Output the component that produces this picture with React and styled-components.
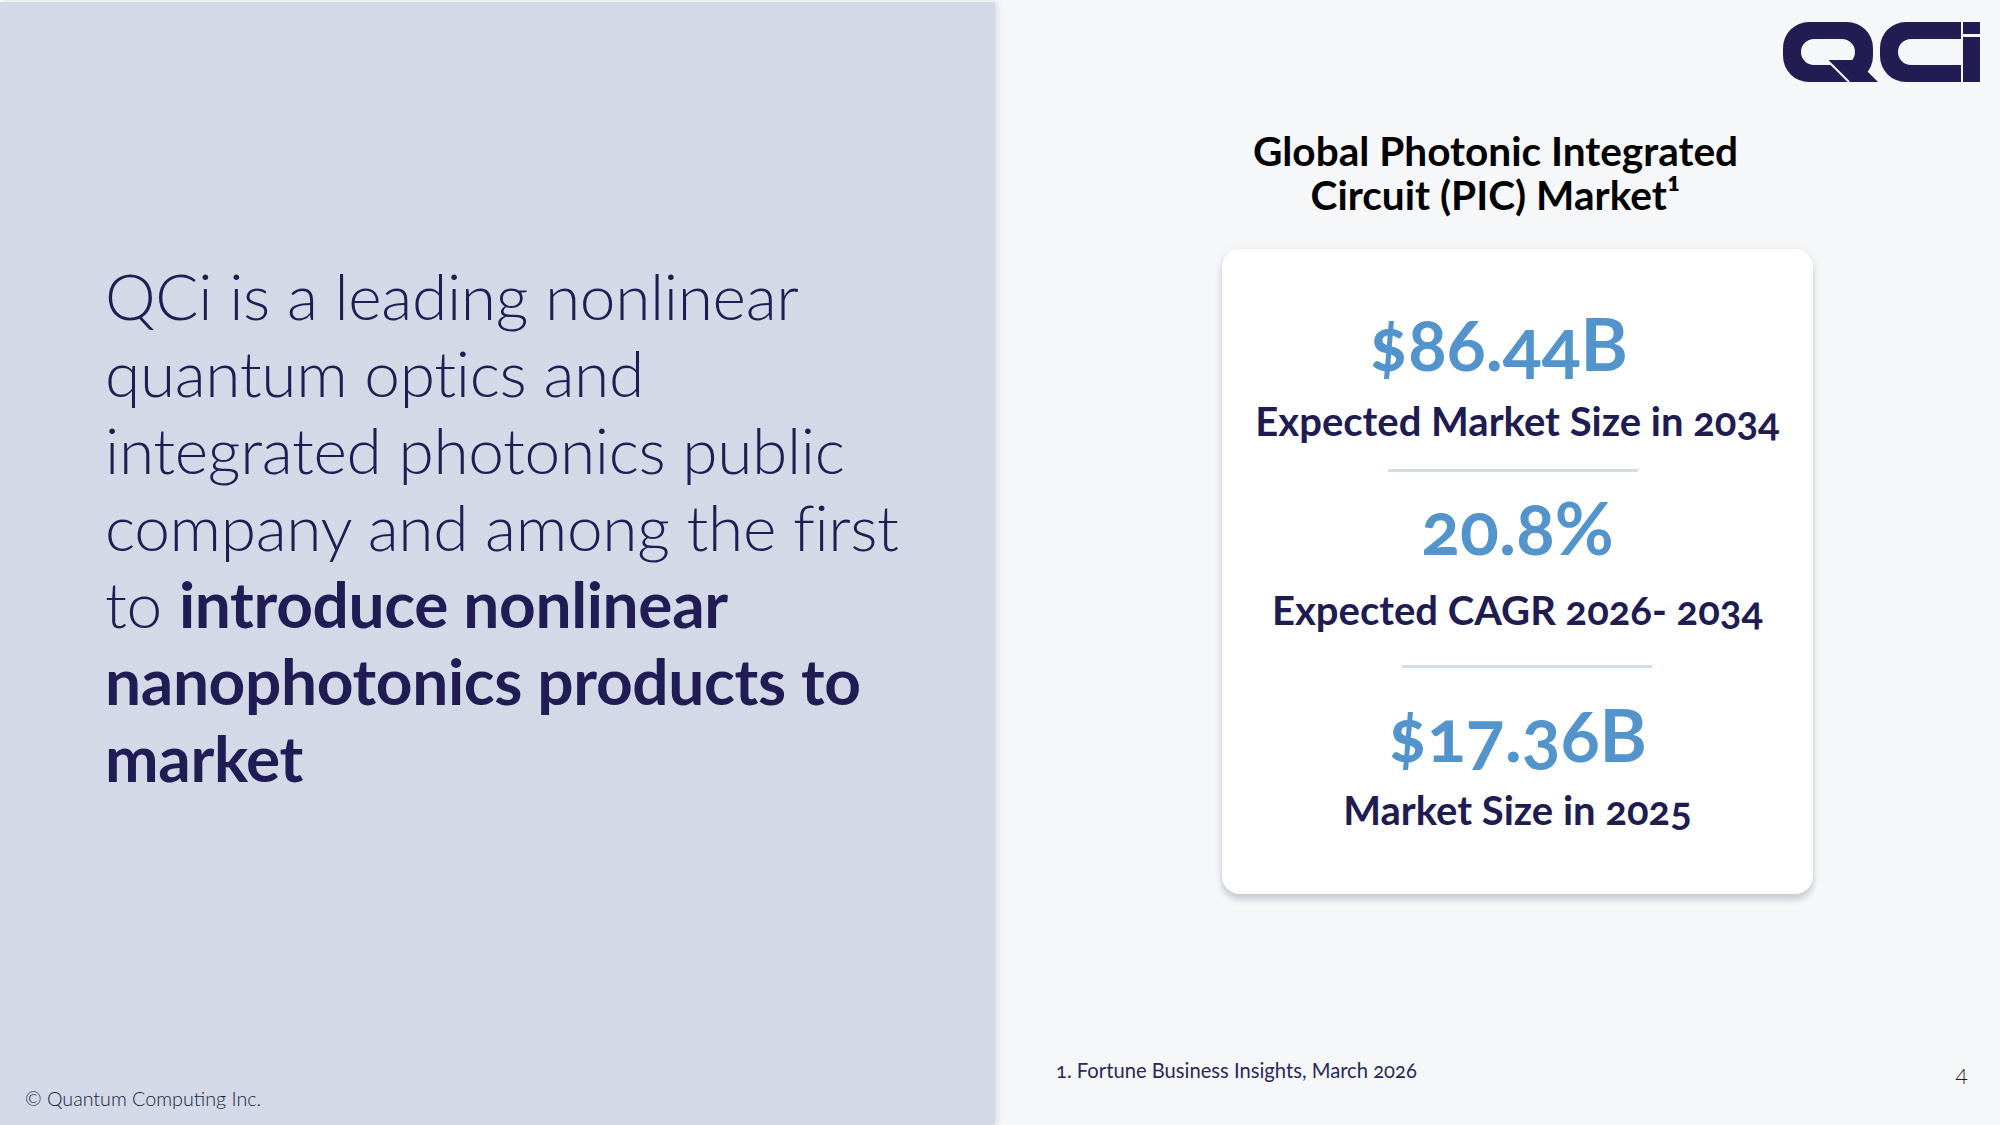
import React from "react";
import styled, { createGlobalStyle } from "styled-components";

const GlobalStyle = createGlobalStyle`
    html, body {
        margin: 0;
        padding: 0;
        background-color: #F6F7F9;
    }
    body {
        font-family: "Lato", "Noto Sans", sans-serif;
        color: #211D54;
    }
`;

const Slide = styled.div`
    width: 2000px;
    height: 1125px;
    display: flex;
    overflow: hidden;
    background-color: #F6F7F9;
`;

const LeftPanel = styled.section`
    width: 995px;
    margin-top: 2px;
    background-color: #D3D9E6;
    box-shadow: 3px 0 6px rgba(40, 50, 80, 0.12);
    display: flex;
    flex-direction: column;
    position: relative;
    z-index: 1;
`;

const Statement = styled.p`
    margin: 255px 0 0 105px;
    font-size: 64px;
    line-height: 77px;
    font-weight: 300;
    color: #211D54;
    letter-spacing: -0.35px;
`;

const Strong = styled.strong`
    font-weight: 700;
`;

const Copyright = styled.div`
    margin-top: auto;
    padding: 0 0 15px 25px;
    font-size: 19.7px;
    font-weight: 300;
    color: #1E1B45;
`;

const RightPanel = styled.section`
    flex: 1;
    display: flex;
    flex-direction: column;
    align-items: center;
    position: relative;
`;

const LogoBar = styled.header`
    align-self: stretch;
    display: flex;
    justify-content: flex-end;
    padding: 22px 20px 0 0;
`;

const Title = styled.h2`
    margin: 47px 0 0 -4px;
    font-size: 40.6px;
    line-height: 44px;
    font-weight: 700;
    color: #000;
    text-align: center;
`;

const Card = styled.div`
    margin: 32px 0 0 40px;
    width: 591px;
    height: 645px;
    box-sizing: border-box;
    padding-top: 54px;
    background-color: #FFFFFF;
    border-radius: 18px;
    box-shadow: 0 6px 6px rgba(70, 75, 110, 0.22), 0 0 8px rgba(70, 75, 110, 0.08);
    display: flex;
    flex-direction: column;
    align-items: center;
`;

const Value = styled.div`
    margin: ${(props) => props.gap || 0}px 0 0 ${(props) => props.shift || 0}px;
    font-size: 72px;
    line-height: 80px;
    font-weight: 700;
    color: #5494CC;
    font-variant-numeric: oldstyle-nums;
`;

const Label = styled.div`
    margin-top: ${(props) => props.gap}px;
    font-size: 40px;
    line-height: 44px;
    font-weight: 700;
    color: #201C52;
    font-variant-numeric: oldstyle-nums;
`;

const Divider = styled.hr`
    margin: ${(props) => props.gap}px 0 0 ${(props) => props.shift || 0}px;
    width: 250px;
    height: 3px;
    border: none;
    background-color: #D3DBE6;
`;

const Footnote = styled.div`
    position: absolute;
    left: 61px;
    bottom: 43px;
    font-size: 20.2px;
    color: #2A2858;
    font-variant-numeric: oldstyle-nums;
`;

const PageNumber = styled.div`
    position: absolute;
    right: 32px;
    bottom: 36px;
    font-size: 22px;
    font-weight: 300;
    color: #1A1A1A;
`;

const Logo = () => (
    <svg width="197" height="60" viewBox="0 0 197 60" aria-label="QCi">
        <g fill="#211D52">
            <path
                fillRule="evenodd"
                d="M26 0 H64 A26 26 0 0 1 90 26 V34 A26 26 0 0 1 64 60 H26 A26 26 0 0 1 0 34 V26 A26 26 0 0 1 26 0 Z M31 17 H59 A13 13 0 0 1 72 30 A13 13 0 0 1 59 43 H31 A13 13 0 0 1 18 30 A13 13 0 0 1 31 17 Z"
            />
            <path d="M44 38 H73 L95 60 H67 Z" />
            <path d="M123 0 H178 V17 H128 A13 13 0 0 0 115 30 A13 13 0 0 0 128 43 H178 V60 H123 A26 26 0 0 1 97 34 V26 A26 26 0 0 1 123 0 Z" />
            <rect x="180" y="0" width="17" height="12" />
            <rect x="180" y="15" width="17" height="45" />
        </g>
        <path d="M44 38 L66 60" stroke="#F6F7F9" strokeWidth="2" />
    </svg>
);

const stats = [
    { value: "$86.44B", label: "Expected Market Size in 2034", labelGap: 16, shift: -38 },
    { value: "20.8%", label: "Expected CAGR 2026- 2034", labelGap: 21, shift: 0 },
    { value: "$17.36B", label: "Market Size in 2025", labelGap: 14, shift: 0 },
];

const App = () => {
    return (
        <>
            <GlobalStyle />
            <Slide>
                <LeftPanel>
                    <Statement>
                        QCi is a leading nonlinear<br />
                        quantum optics and<br />
                        integrated photonics public<br />
                        company and among the first<br />
                        to <Strong>introduce nonlinear<br />
                        nanophotonics products to<br />
                        market</Strong>
                    </Statement>
                    <Copyright>© Quantum Computing Inc.</Copyright>
                </LeftPanel>
                <RightPanel>
                    <LogoBar>
                        <Logo />
                    </LogoBar>
                    <Title>
                        Global Photonic Integrated<br />
                        Circuit (PIC) Market¹
                    </Title>
                    <Card>
                        <Value shift={stats[0].shift}>{stats[0].value}</Value>
                        <Label gap={stats[0].labelGap}>{stats[0].label}</Label>
                        <Divider gap={26} shift={-10} />
                        <Value gap={15}>{stats[1].value}</Value>
                        <Label gap={stats[1].labelGap}>{stats[1].label}</Label>
                        <Divider gap={33} shift={18} />
                        <Value gap={26}>{stats[2].value}</Value>
                        <Label gap={stats[2].labelGap}>{stats[2].label}</Label>
                    </Card>
                    <Footnote>1. Fortune Business Insights, March 2026</Footnote>
                    <PageNumber>4</PageNumber>
                </RightPanel>
            </Slide>
        </>
    );
};

export default App;
